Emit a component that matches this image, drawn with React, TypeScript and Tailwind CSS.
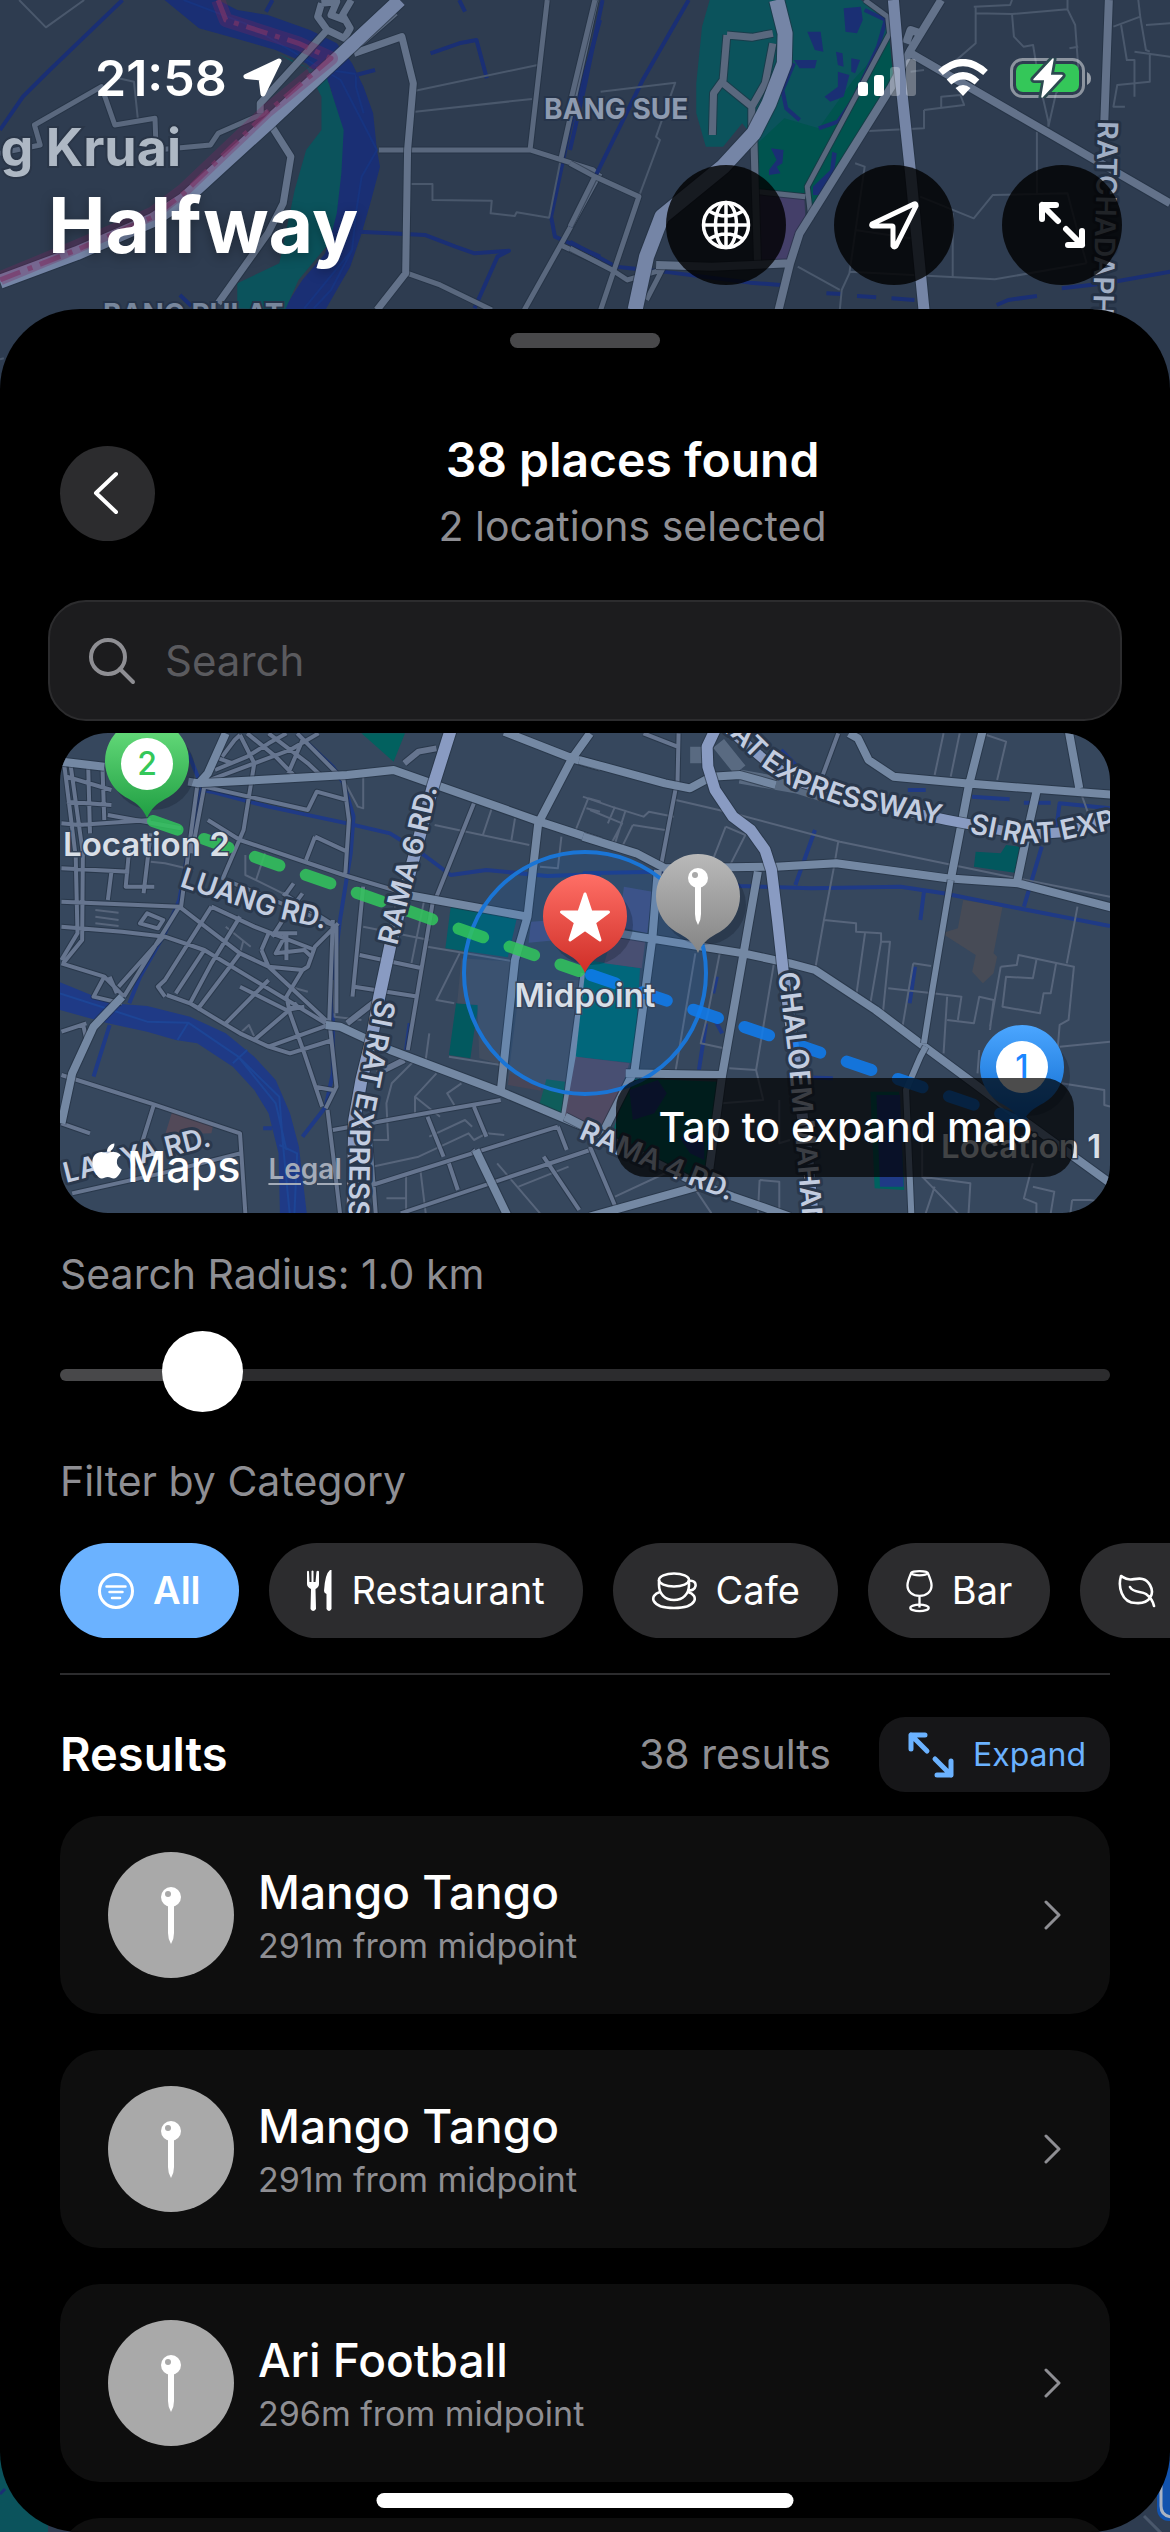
import { useId, useState, type CSSProperties, type ReactNode } from "react";
import { FaApple } from "react-icons/fa";

/* ---------- map primitives ---------- */

type LineProps = { d: string; c: string; w: number; dash?: string; o?: number };

function Line({ d, c, w, dash, o }: LineProps) {
  return (
    <path
      d={d}
      fill="none"
      stroke={c}
      strokeWidth={w}
      strokeDasharray={dash}
      opacity={o}
      strokeLinejoin="round"
      vectorEffect="non-scaling-stroke"
    />
  );
}

function Road({ d, c, w }: LineProps) {
  return (
    <>
      <Line d={d} c="#222f40" w={w + 2} o={0.6} />
      <Line d={d} c={c} w={w} />
    </>
  );
}

type RoadLabelProps = { d: string; children: string; end?: boolean; fill?: string; halo?: string };

function RoadLabel({ d, children, end, fill = "#c3cde0", halo = "#2a384c" }: RoadLabelProps) {
  const id = useId();
  return (
    <>
      <path id={id} d={d} fill="none" />
      <text
        className="font-semibold text-[28px]"
        fill={fill}
        stroke={halo}
        strokeWidth={6}
        strokeLinejoin="round"
        paintOrder="stroke"
        textAnchor={end ? "end" : "start"}
      >
        <textPath href={`#${id}`} startOffset={end ? "100%" : "0"}>
          {children}
        </textPath>
      </text>
    </>
  );
}

/* ---------- full-screen map behind the sheet ---------- */

function CityMap() {
  const street = "#5a687e";
  const avenue = "#63728a";
  const highway = "#7585a6";
  const lane = "#4a586c";
  const water = "#1a2f74";
  return (
    <svg
      aria-hidden="true"
      className="absolute inset-0 h-full w-full"
      viewBox="0 0 1170 2532"
      preserveAspectRatio="xMidYMin slice"
    >
      <rect width="1170" height="2532" fill="#2e3c50" />
      <g transform="scale(0.3827 0.3333)">
        <path
          fill={water}
          d="M430 0L570 0L620 30L700 45L810 90L880 130L920 190L950 260L975 340L985 450L993 500L970 600L945 700L915 800L850 930L740 930L790 840L850 760L880 600L890 450L890 380L860 250L800 190L720 150L600 110L520 85Z"
        />
        <path
          fill="#0b535c"
          d="M725 160L770 190L850 220L870 290L898 390L892 520L880 640L860 730L780 840L745 930L620 925L620 850L730 790L770 570L800 450L840 390L840 290L800 200Z"
        />
        <Line c="#173480" w={2} d="M480 0L640 70L780 165L890 240L985 450L945 530L930 640L920 750L795 925M860 210L930 222L930 260L950 340M920 750L865 870L820 925" />
        <Line c={water} w={4} d="M320 0L130 210L60 290L0 390M1200 0L1215 35M712 0L695 35M1125 160L1200 130L1245 120L1272 235M930 225L980 210M470 885L500 918M940 695L1110 705L1190 740L1240 760L1330 752L1300 770L1240 925M1568 60L1490 380L1440 650L1450 710L1568 770" />
        <Line c={lane} w={2} d="M50 0L120 82L220 0M1085 272L1405 195M1085 335L1390 297M1075 552L1130 552L1130 600L1285 602L1282 640L1345 648L1350 637L1435 653L1465 480M310 235L350 245L360 355M0 1078L10 1075" />
        <Road c={street} w={5} d="M0 460L105 435L90 375L265 260L300 375L405 355L408 450L550 435L570 400L700 335M990 450L1385 450L1550 510L1568 530M1430 0L1385 450M1558 0L1465 480M1568 520L1465 735L1370 930M1465 735L1568 790M1065 820L1150 855L1285 930M925 150L1035 40" />
        <Road c={avenue} w={7} d="M705 370L760 470L740 610L700 700L570 910M925 160L1050 110L1080 250L1065 450L1060 820L985 930M855 90L680 310L680 340M840 10L830 50L855 90L900 115L915 85L895 45L918 0M840 10L880 5L865 45L900 60" />
        <Road c={highway} w={14} d="M1045 0L700 370L480 600L400 660L200 760L0 845" />
        <Line c="#7a2560" w={14} o={0.3} d="M570 0L590 60L780 130L865 175L700 330L480 570L400 640L200 740L0 835" />
        <Line c="#7c3567" w={5} o={0.65} dash="22 8 5 8" d="M570 0L590 60L780 130L865 175L700 335L480 580L400 650L200 750L0 840" />
      </g>
      <g transform="translate(570 0) scale(0.3827 0.3333)">
        <path fill="#0b535c" d="M365 0L760 0L825 60L835 120L800 300L650 570L490 570L490 430L450 370L400 440L355 440L330 340L330 250L345 80Z" />
        <path fill="#00544f" d="M490 430L560 355L650 385L740 240L835 120L845 240L625 655L615 580L490 575Z" />
        <path fill="#443f69" d="M490 578L612 592L617 690L575 780L497 785Z" />
        <path
          fill={water}
          d="M715 25L760 20L765 60L750 100L720 95ZM620 95L655 95L662 155L640 150ZM585 180L645 180L640 205L600 205ZM695 155L712 160L715 200L700 195ZM735 175L758 180L745 220L735 215ZM700 215L730 225L715 290L680 305L665 290L700 260ZM525 445L558 450L555 490L540 500L550 520L520 525L520 510L540 480ZM685 455L697 460L690 520L660 585L635 585L635 560L680 510Z"
        />
        <Line c={water} w={4} d="M310 0L190 240L70 520L0 680M85 0L40 250L0 450M0 725L120 800L245 815L470 848L550 855M770 30L825 60L805 140L740 300L700 365L650 385M585 190L555 270L565 325L600 360M670 880L710 882M750 888L800 892M840 895L900 900M1115 915L1145 900L1220 888M1285 865L1400 850L1568 815" />
        <Line c={lane} w={2} d="M80 275L275 248L225 410L235 420L180 590M1055 20L1150 15L1155 0M1060 40L1155 42L1300 28L1300 0M1060 20L1060 130L1000 190M1155 42L1160 110L1185 140L1210 135L1225 240L1250 365L1250 380M1300 28L1320 75L1328 200L1270 280L1250 380M1305 145L1328 140M925 330L1030 315L1020 285L970 290L970 325M780 393L925 385L925 330M1220 395L1220 580M745 490L770 500L730 820L710 870L705 930M595 800L705 870M730 815L1110 838L1350 790M745 690L890 715M1000 640L1000 835M915 590L1055 655L1105 585L1300 580L1330 710L1350 790M1420 80L1490 50L1485 0M1440 75L1455 180L1475 180L1475 290M1505 75L1568 70M1490 50L1505 150L1515 155M1475 155L1568 170M1515 160L1515 245L1430 255L1420 320L1450 320M890 215L925 210" />
        <Road c={street} w={5} d="M0 490L65 530L180 590L80 930M65 530L0 680M0 745L110 810L150 840L240 810M65 0L0 310M245 800L200 900M770 0L830 50L835 100L620 560L630 660M490 575L615 590" />
        <Road c={street} w={7} d="M410 105L475 112L530 100M410 105L400 240L375 280L372 405M400 250L475 320L475 400M530 130L510 250L475 320M480 400L490 790" />
        <Road c={avenue} w={8} d="M970 0L890 150L840 260L600 700L575 790L545 930M878 130L890 90L915 100M225 795L370 800L575 790M1408 0L1395 400M890 160L1568 610" />
        <Road c={highway} w={15} d="M540 0L562 100L560 190L520 310L480 400L400 500L240 650L200 770L170 930" />
        <Road c={highway} w={11} d="M845 0L860 200L890 520L925 930" />
      </g>
      <text x="181" y="166" textAnchor="end" className="font-bold text-[52px]" fill="#aeb8c4" stroke="#2a3648" strokeWidth="4" paintOrder="stroke">
        Bang Kruai
      </text>
      <text x="544" y="119" className="font-bold text-[28px]" fill="#8e9bb0" stroke="#26344a" strokeWidth="4" paintOrder="stroke">
        BANG SUE
      </text>
      <text x="103" y="324" className="font-bold text-[28px]" fill="#77869c" stroke="#26344a" strokeWidth="4" paintOrder="stroke">
        BANG PHLAT
      </text>
      <RoadLabel d="M1098 121L1096 200L1088 520" fill="#a0aec4" halo="#243144">
        RATCHADAPHISEK RD.
      </RoadLabel>
      <path d="M0 2420L0 2532L48 2532L48 2500Z" fill="#0b535c" />
      <path d="M0 2494L5 2489" stroke={water} strokeWidth="3" />
      <path d="M1144 2516L1162 2534" stroke="#4a586c" strokeWidth="3" />
      <rect x="1157" y="2420" width="30" height="101" rx="12" fill="#1253ae" />
      <path d="M1161 2470V2506Q1161 2517 1174 2517" fill="none" stroke="#aab3c2" strokeWidth="3" />
    </svg>
  );
}

/* ---------- map preview ---------- */

type PinProps = { x: number; y: number; from: string; to: string; children: ReactNode };

function Pin({ x, y, from, to, children }: PinProps) {
  const id = useId();
  return (
    <g transform={`translate(${x} ${y})`}>
      <defs>
        <linearGradient id={id} x1="0" y1="0" x2="0" y2="1">
          <stop offset="0" stopColor={from} />
          <stop offset="1" stopColor={to} />
        </linearGradient>
      </defs>
      <ellipse cx="6" cy="-48" rx="42" ry="40" fill="#0b1422" opacity="0.25" />
      <path d="M0 0C-4 -9 -9 -14 -18 -19A42 42 0 1 1 18 -19C9 -14 4 -9 0 0Z" fill={`url(#${id})`} />
      {children}
    </g>
  );
}

function PreviewMap() {
  const lane = "#57657b";
  const street = "#66758f";
  const avenue = "#7488a3";
  const highway = "#899bc2";
  const water = "#1f3a86";
  return (
    <svg
      role="img"
      aria-label="Map with both locations and their midpoint"
      className="block h-full w-full"
      viewBox="0 0 1050 480"
      preserveAspectRatio="xMidYMid slice"
    >
      <rect width="1050" height="480" fill="#36475d" />
      <g transform="translate(-20 -13) scale(0.35714 0.33333)">
        <path fill={water} d="M40 780L200 850L300 858L420 890L520 940L600 1010L660 1080L700 1180L725 1280L748 1490L672 1490L668 1300L640 1180L600 1110L540 1040L440 970L380 960L300 935L190 910L40 865Z" />
        <Line c="#1d4596" w={2} d="M56 820L200 870L300 905L415 908L555 1010L670 1130L680 1270L700 1490M415 908L385 960M540 1030L580 990M670 1275L720 1300L712 1490M555 1010L660 1150L690 1290" />
        <Line c={water} w={4} d="M415 100L440 165L455 210L480 215L640 260L860 310L980 340L1010 360L1075 405L1150 465L1250 450L1420 468L1570 462M720 40L820 140L850 190L878 290L870 400L840 600L820 780L820 1060L800 1160L735 1250M450 210L430 300L390 540L350 640L280 770L250 850M195 915L150 1070M1035 910L1025 990M625 1225L650 1225" />
        <path fill="#02615f" d="M900 40L1022 40L990 125Z" />
        <path fill="#025f6a" d="M1150 560L1335 595L1310 712L1135 685Z" />
        <path fill="#02595f" d="M1165 850L1228 855L1215 940L1205 1015L1145 1005Z" />
        <path fill="#414d60" d="M1180 715L1325 725L1295 1035L1230 1015L1225 855L1168 850ZM1345 780L1520 780L1495 1030L1470 1110L1310 1080Z" />
        <path fill="#0f5d5b" d="M1418 1078L1470 1085L1462 1185L1398 1155Z" />
        <path fill="#484658" d="M1315 1060L1405 1095L1402 1112L1310 1095Z" />
        <path fill="#424f7c" d="M1375 605L1440 600L1450 660L1368 668Z" />
        <path fill="#524958" d="M370 1175L485 1215L480 1240L350 1245Z" />
        <Line c={lane} w={2} d="M855 190L890 260L905 265L905 170M1105 315L1370 375M1265 265L1240 345M1330 295L1320 360M575 405L575 465L680 520M630 400L605 480M310 425L350 430L430 450M155 570L220 578M155 590L220 600M155 610L220 618M1085 680L1330 725M905 620L1090 660M1075 545L1040 730M1175 700L1110 840L1160 850M1145 1010L1290 1035M1090 940L1080 1020M560 940L585 915L600 950M700 800L750 815M1050 1020L985 1090L970 1150L975 1260L930 1260M1110 1060L1050 1130L1120 1190M1050 1130L1050 1180M1180 1090L1140 1120L1160 1155M1090 1250L1190 1200L1210 1220M930 1340L1060 1310L1200 1240L1215 1260L1250 1240L1300 1245M970 1435L1025 1435M1025 1360L1025 1480M1065 1350L1080 1480M1280 1330L1400 1480M1340 1400L1480 1340M1535 235L1500 330M1535 235L1570 245M1530 265L1568 275M1460 350L1450 445L1400 440M520 620L590 680M570 660L560 700M820 780L825 890L900 900" />
        <Road c={street} w={4} d="M450 190L600 130L700 90L780 40M560 45L600 130L570 330L510 480M490 150L580 110L640 70L690 40M510 110L545 60L560 45M500 115L540 130M580 40L660 110L710 165M640 40L750 130L790 170M735 60L695 160M720 40L850 180L865 300L855 460M460 200L750 270L775 215L860 240M470 300L560 360L850 465L1100 545M770 350L745 420M770 350L860 395M440 200L395 560M460 200L425 400M68 135L100 410L105 640L60 720M85 130L120 400L118 660L65 730M135 140L140 340M175 145L180 300M75 170L200 210M75 245L200 255M60 310L110 315M105 315L310 300M190 285L395 325M60 445L250 455M60 545L390 560M60 620L230 635L350 650L460 690L800 910M250 385L240 500L320 500M310 340L290 520M200 455L190 540M390 560L560 700L640 740L820 920M390 560L235 830M300 580L280 610L330 625L345 600ZM345 650L220 800M480 560L350 780L330 800L350 830M460 690L380 820M560 700L440 870M560 590L480 730L420 850M640 780L520 910M720 850L600 960M560 800L690 870L740 860M520 480L830 620M480 560L600 620L770 690M680 520L830 620L830 880M835 610L770 680L750 740L735 750M620 690L640 740L735 750M735 750L690 830L700 880M690 640L660 700L740 690L760 710M640 640L620 690M660 640L720 640M690 640L690 720M735 520L680 600L650 650M710 490L690 520M355 825L420 850L560 940L640 980L700 1000L820 960M700 880L740 1000L790 1160M640 980L820 910M60 730L180 770L235 830M180 770L150 830L230 850M130 910L60 935M120 910L130 960L90 1060M195 770L215 820M60 1065L310 1150L560 1240L575 1480M320 1150L285 1270M60 1210L140 1240M90 1420L340 1360L560 1300M805 1170L820 1300L840 1480M770 1100L820 1110M820 600L810 900L830 1100L800 1165M905 500L875 830M895 705L1070 745M880 800L1060 830M1100 545L1030 990M1215 250L1110 530M820 1230L1130 1170L1290 1140M1085 1190L1130 1310M1215 1160L1250 1250M930 1395L1210 1300L1450 1220M1210 1300L1220 1290M1010 1480L1540 1290M1145 1330L1170 1410M1450 1220L1475 1290M1410 1310L1510 1470M920 1200L940 1480" />
        <Road c={street} w={6} d="M1020 130L1060 95L1110 85M860 910L920 860L945 840M945 1060L1020 1020" />
        <Road c={avenue} w={8} d="M60 125L180 140M415 185L445 190L470 160L520 40M440 190L700 175L860 165L990 150L1400 305L1570 365M1540 40L1490 115L1395 310L1365 590L1330 720L1290 1115M1300 35L1490 115L1570 140M1030 525L1365 590M800 915L840 920L980 990L1290 1115L1500 1210L1590 1250M60 1210L90 1060L150 920L230 830M1220 1290L1310 1490M1525 760L1480 1120L1470 1190" />
        <Road c={highway} w={12} d="M1150 30L1100 200L1040 440L980 680L950 830L930 950L900 1080L880 1200L875 1490" />
      </g>
      <g transform="translate(530 -13) scale(0.35714 0.33333)">
        <path fill="#00656c" d="M-10 720L140 745L125 1030L-40 1010Z" />
        <path fill="#424f7c" d="M95 500L175 515L160 640L80 620Z" />
        <path fill="#504a63" d="M-40 1010L110 1030L90 1100L40 1220L-70 1190ZM60 655L155 660L145 745L40 730Z" />
        <path fill="#474b56" d="M1045 540L1155 560L1130 700L1140 710L1130 760L1100 790L1070 755L1080 705L985 640L1030 625Z" />
        <path fill="#02585e" d="M1080 395L1150 400L1165 375L1203 380L1190 458L1075 440Z" />
        <path fill="#00625f" d="M110 1075L357 1085L325 1400L60 1250Z" />
        <path fill={water} d="M110 1110L190 1080L215 1120L180 1180L120 1200ZM250 1250L320 1240L320 1320L280 1300Z" />
        <path fill="#00625f" d="M785 1115L865 1115L880 1410L797 1405Z" />
        <path fill={water} d="M802 1125L868 1125L878 1400L812 1400Z" />
        <Line c={water} w={4} d="M-20 460L190 455L420 498L620 505L870 500L990 520L1200 565L1456 618M535 90L590 150M630 330L600 420L575 495M935 515L925 600M1070 230L1175 238M890 210L940 210M1215 248L1290 248M1305 330L1315 250L1456 265M1265 380L1240 470L1215 560M910 740L895 850M355 770L345 820M325 910L305 1050M600 1072L680 1075M350 900L370 940" />
        <Line c={lane} w={2} d="M-20 230L60 260L150 290L165 275L235 290M240 240L400 280L700 365L1150 465L1456 530M0 270L90 310L60 370M70 260L50 310M100 270L70 370M120 315L210 330M120 315L90 380M380 320L435 345L390 440M380 320L340 430M695 365L685 430L655 600L630 750M655 600L745 610L745 635L815 640L815 665L840 665L820 880M770 640L745 830M815 665L785 850M905 730L875 920M905 730L955 738M835 805L960 820L1040 830L1030 900M1000 830L990 1000M1000 900L1075 910L1090 830L1130 840L1120 930M1090 990L1085 1060M1150 740L1120 920M1150 740L1195 735L1200 705L1355 740L1340 900L1315 915L1310 980M1250 720L1240 775L1165 770L1155 860L1260 880L1270 820L1290 820L1305 730M1365 560L1335 730M1456 965L1315 980M1320 1090L1440 1110L1440 1155L1456 1160M990 40L965 165M1035 40L1010 170M1110 45L1165 65L1140 180M1370 205L1395 280M295 700L240 1050M365 690L330 880L310 970L375 985M515 730L465 1050L390 1045M465 1050L485 1140L370 1150M530 1140L530 1270L560 1260M475 1380L530 1385L530 1480M475 1380L470 1480M930 1370L1030 1480M930 1200L930 1370L1065 1390L1060 1480M965 1400L940 1480M1240 1330L1215 1435L1250 1450L1250 1480M1240 1400L1300 1415L1290 1480M1350 1440L1400 1440L1456 1450M1350 1440L1345 1480M290 1400L340 1480M70 1430L230 1350" />
        <Road c={street} w={4} d="M150 40L245 80M248 40L245 190M240 205L200 430M695 40L650 170M0 1280L75 1470" />
        <Line c="#596a81" w={14} d="M300 80L300 130M360 70L420 150M420 170L580 200L700 240" />
        <Road c={avenue} w={8} d="M-30 120L210 190L280 205L340 170L420 165L520 195M725 40L750 55L780 120L850 170L1050 190L1470 225M1100 30L1060 200L1010 480M1340 30L1370 205M1250 215L1230 310L1195 490M-20 350L130 400L210 445L520 440L690 430L1000 475L1200 490L1470 565M190 450L175 650L125 1050L40 1230M80 640L430 700L560 730L630 750L800 870L930 975L1100 1110L1200 1190L1470 1400M470 455L430 700L370 1065L330 1380M100 1060L370 1065M0 1490L300 1400M-70 1190L280 1380L400 1430L560 1490" />
        <Road c={avenue} w={6} d="M1010 480L960 800L935 970M940 980L925 1010L885 1110L900 1490" />
        <Road c={highway} w={10} d="M380 20L500 130L600 190L780 250L1000 300L1220 345L1340 335L1470 285" />
        <Road c={highway} w={11} d="M350 30L328 80L330 140L350 210L400 290L450 330L490 390L508 450L525 600L540 745L560 900L590 1150L610 1320L625 1490" />
      </g>
      <circle cx="525" cy="240" r="121" fill="#0a84ff" fillOpacity="0.1" stroke="#1a75d6" strokeWidth="4" />
      <g strokeWidth="12" strokeLinecap="round" strokeDasharray="26 28" opacity="0.85">
        <path d="M93 88L519 238" stroke="#32c65c" />
        <path d="M531 242L962 388" stroke="#0f7df0" />
      </g>
      <RoadLabel d="M337 213L352 152L366 104L382 34">RAMA 6 RD.</RoadLabel>
      <RoadLabel d="M316 266L302 340L290 400L287 600">SI RAT EXPRESSWAY</RoadLabel>
      <RoadLabel d="M119 153L205 182L290 202">LUANG RD.</RoadLabel>
      <RoadLabel d="M6 450L190 403">LAT YA RD.</RoadLabel>
      <RoadLabel end d="M600 -50L675 7L700 32L735 56L780 72L880 92">
        RAT EXPRESSWAY
      </RoadLabel>
      <RoadLabel d="M909 100L964 111L994 109L1050 97L1300 40">SI RAT EXPRESSWAY</RoadLabel>
      <RoadLabel d="M718 240L728 320L742 480L752 640">CHALOEM MAHANAKHON</RoadLabel>
      <RoadLabel d="M518 405L560 423L620 448L720 488">RAMA 4 RD.</RoadLabel>
      <Pin x={87} y={85} from="#6be07f" to="#1f9e42">
        <circle cy="-54" r="26" fill="#fff" />
        <text y="-43" textAnchor="middle" className="font-medium text-[32px]" fill="#34c759">
          2
        </text>
      </Pin>
      <Pin x={962} y={391} from="#4ba6ff" to="#0a66cc">
        <circle cy="-57" r="26" fill="#fff" />
        <text y="-46" textAnchor="middle" className="font-medium text-[32px]" fill="#1a86ff">
          1
        </text>
      </Pin>
      <Pin x={638} y={220} from="#b9b9b9" to="#858585">
        <g transform="translate(-18 -85)">
          <PinGlyph hole="#a9a9a9" />
        </g>
      </Pin>
      <Pin x={525} y={240} from="#ff6f66" to="#cf2e27">
        <path
          fill="#fff"
          stroke="#fff"
          strokeWidth="3"
          strokeLinejoin="round"
          d="M0 -79L6 -61L23.500 -61L9.500 -50.500L15 -33L0 -43.500L-15 -33L-9.500 -50.500L-23.500 -61L-6 -61Z"
        />
      </Pin>
      <g className="font-semibold text-[33px]" fill="#d9dfe7" stroke="#34445a" strokeWidth="3" paintOrder="stroke">
        <text x="3" y="123">Location 2</text>
        <text x="525" y="274" textAnchor="middle">Midpoint</text>
        <text x="881" y="425">Location 1</text>
      </g>
    </svg>
  );
}

/* ---------- icons ---------- */

function PinGlyph({ hole }: { hole: string }) {
  return (
    <>
      <path d="M15 16H21V46Q21 52 18 57Q15 52 15 46Z" fill="#fff" />
      <circle cx="18" cy="10" r="10" fill="#fff" />
      <circle cx="15" cy="7" r="3" fill={hole} />
    </>
  );
}

function ExpandIcon({ className, weight }: { className: string; weight: number }) {
  return (
    <svg viewBox="0 0 48 48" className={className} fill="none" stroke="currentColor" strokeWidth={weight} strokeLinecap="round" strokeLinejoin="round" aria-hidden="true">
      <path d="M4 18V4H18M4 4L20 20M44 30V44H30M44 44L28 28" />
    </svg>
  );
}

function GlobeIcon() {
  return (
    <svg viewBox="0 0 50 50" className="size-[50px]" fill="none" stroke="currentColor" strokeWidth="3.500" aria-hidden="true">
      <circle cx="25" cy="25" r="22.500" />
      <ellipse cx="25" cy="25" rx="10.500" ry="22.500" />
      <path d="M25 2V48M2 25H48M8 11Q25 21 42 11M8 39Q25 29 42 39" />
    </svg>
  );
}

function NavigateIcon() {
  return (
    <svg viewBox="0 0 50 50" className="size-[50px]" fill="none" stroke="currentColor" strokeWidth="5" strokeLinejoin="round" aria-hidden="true">
      <path d="M45 4L3 24Q2 26 4 26H23Q24 26 24 27V46Q25 48 27 46L47 6Q47 3 45 4Z" />
    </svg>
  );
}

function FilterIcon() {
  return (
    <svg viewBox="0 0 36 36" className="h-9 w-9" fill="none" stroke="currentColor" strokeWidth="3" strokeLinecap="round" aria-hidden="true">
      <circle cx="18" cy="18" r="16.500" />
      <path d="M8.500 13.500H27.500M11.500 19H24.500M14 25H22" strokeWidth="2.500" />
    </svg>
  );
}

function ForkKnifeIcon() {
  return (
    <svg viewBox="0 0 26 42" className="h-[42px] w-[26px]" fill="currentColor" aria-hidden="true">
      <path d="M0 1.500Q1 0 2 1.500L2.500 12H4.500V1Q5.500 0 6.500 1V12H8.500L9.500 1.500Q11 0 12 1.500V14Q12 17 8.500 19L9 39Q6 43 3.500 39L4 19Q0 17 0 14Z" />
      <path d="M24.500 0V39Q22 43 19.500 39V24Q17 23 17 21Q18 4 22.500 0.500Q24 -0.500 24.500 0Z" />
    </svg>
  );
}

function CupIcon() {
  return (
    <svg viewBox="0 0 46 38" className="h-[38px] w-[46px]" fill="none" stroke="currentColor" strokeWidth="2.600" aria-hidden="true">
      <ellipse cx="23" cy="8" rx="15" ry="6.500" />
      <path d="M8 8V13C8 22 14 28 23 28S38 22 38 13V8M38 9C43 8 45 11 44.500 14S41 19 37 18M9 20C-2 23 -1 36 23 36S48 23 37 20" />
    </svg>
  );
}

function WineIcon() {
  return (
    <svg viewBox="0 0 28 44" className="h-11 w-[27px]" fill="none" stroke="currentColor" strokeWidth="2.400" aria-hidden="true">
      <path d="M5.500 3C2 11 1.500 13 1.500 16C1.500 23 7 27 14 27S26.500 23 26.500 16C26.500 13 26 11 22.500 3M14 27V39" />
      <ellipse cx="14" cy="3.500" rx="8.500" ry="2.200" />
      <ellipse cx="14" cy="39.500" rx="9.500" ry="3.300" />
    </svg>
  );
}

function LeafIcon() {
  return (
    <svg viewBox="0 0 38 34" className="h-[34px] w-[38px]" fill="none" stroke="currentColor" strokeWidth="2.600" strokeLinecap="round" strokeLinejoin="round" aria-hidden="true">
      <path d="M3 2C0 12 3 29 18 29C32 30 37 20 32 11C27 2 19 5 13 5.500C8 6 5 3 3 2ZM12 13C15 19 23 17 28 20C32 23 35 27 36 32" />
    </svg>
  );
}

/* ---------- header ---------- */

function StatusBar() {
  return (
    <div className="flex h-[155px] items-center justify-between pl-[95px] pr-[78px] text-white">
      <div className="flex items-center gap-4">
        <span className="text-[50px] font-semibold leading-none">21:58</span>
        <svg viewBox="0 0 40 40" className="size-10" aria-hidden="true">
          <path d="M36 3L3 18.500L18 20L20 36Z" fill="#fff" stroke="#fff" strokeWidth="5" strokeLinejoin="round" />
        </svg>
      </div>
      <div className="flex items-center gap-[22px]">
        <svg viewBox="0 0 58 37" className="h-[37px] w-[58px]" fill="#fff" aria-label="Signal, 2 of 4 bars" role="img">
          <rect y="23" width="10" height="14" rx="3" />
          <rect x="16" y="16" width="10" height="21" rx="3" />
          <rect x="32" y="8" width="10" height="29" rx="3" opacity="0.3" />
          <rect x="48" y="0" width="10" height="37" rx="3" opacity="0.3" />
        </svg>
        <svg viewBox="0 0 50 37" className="h-[37px] w-[50px]" fill="none" stroke="#fff" strokeWidth="7" aria-label="Wi-Fi" role="img">
          <path d="M2.500 13.500Q25 -6.500 47.500 13.500M11 23Q25 10.500 39 23" />
          <path d="M17.500 29Q25 23 32.500 29L25 37Z" fill="#fff" stroke="none" />
        </svg>
        <svg viewBox="0 0 82 40" className="h-10 w-[82px]" aria-label="Battery charging" role="img">
          <rect x="1.500" y="1.500" width="72" height="37" rx="11" fill="none" stroke="#fff" strokeOpacity="0.45" strokeWidth="3" />
          <path d="M77 14V27Q81 25 81 20.500T77 14Z" fill="#fff" opacity="0.5" />
          <rect x="6" y="6" width="63" height="28" rx="7" fill="#34c759" />
          <path d="M43 1L24 21.500H35L32 39L52 17.500H40Z" fill="#fff" stroke="#2c4a50" strokeWidth="7" strokeLinejoin="round" paintOrder="stroke" />
          <path d="M43 1L24 21.500H35L32 39L52 17.500H40Z" fill="#fff" stroke="#fff" strokeWidth="1.500" strokeLinejoin="round" />
        </svg>
      </div>
    </div>
  );
}

function RoundButton({ label, children }: { label: string; children: ReactNode }) {
  return (
    <button type="button" aria-label={label} className="flex size-[120px] items-center justify-center rounded-full bg-black/80 text-white">
      {children}
    </button>
  );
}

function TopBar() {
  return (
    <div className="mt-[10px] mb-6 flex h-[120px] items-center justify-between px-12">
      <h1 className="text-[77px] font-bold leading-none text-white drop-shadow-[0_3px_6px_rgba(0,0,0,0.3)]">Halfway</h1>
      <div className="flex gap-12">
        <RoundButton label="Map style">
          <GlobeIcon />
        </RoundButton>
        <RoundButton label="My location">
          <NavigateIcon />
        </RoundButton>
        <RoundButton label="Full screen">
          <ExpandIcon className="size-[48px]" weight={6} />
        </RoundButton>
      </div>
    </div>
  );
}

/* ---------- sheet ---------- */

function MapPreview() {
  return (
    <section className="relative mx-[60px] mt-3 h-[480px] overflow-hidden rounded-[48px]">
      <PreviewMap />
      <div className="absolute bottom-5 left-[27px] flex items-end text-white">
        <FaApple className="mb-3 size-10" aria-hidden="true" />
        <span className="text-[43px] leading-[54px] font-medium">Maps</span>
        <a href="#legal" className="ml-7 text-[28px] leading-[48px] font-semibold text-[#a3abb8] underline underline-offset-4">
          Legal
        </a>
      </div>
      <button type="button" className="absolute right-9 bottom-9 h-[99px] rounded-[30px] bg-black/70 px-[42px] text-[41px] font-medium text-white">
        Tap to expand map
      </button>
    </section>
  );
}

const MIN_KM = 0.5;
const MAX_KM = 5.25;

function RadiusSlider() {
  const [km, setKm] = useState(1);
  const fill = ((km - MIN_KM) / (MAX_KM - MIN_KM)) * 100;
  return (
    <div className="mx-[60px] mt-[34px]">
      <label htmlFor="radius" className="block text-[41px] leading-[54px] text-[#8e8e93]">
        Search Radius: {km.toFixed(1)} km
      </label>
      <input
        id="radius"
        type="range"
        min={MIN_KM}
        max={MAX_KM}
        step={0.05}
        value={km}
        onChange={(e) => setKm(Number(e.target.value))}
        style={{ "--fill": `${fill}%` } as CSSProperties}
        className="mt-[33px] block h-[81px] w-full appearance-none bg-transparent [&::-webkit-slider-runnable-track]:h-3 [&::-webkit-slider-runnable-track]:rounded-full [&::-webkit-slider-runnable-track]:bg-[linear-gradient(to_right,#48484a_var(--fill),#2c2c2e_var(--fill))] [&::-webkit-slider-thumb]:mt-[-38px] [&::-webkit-slider-thumb]:size-[81px] [&::-webkit-slider-thumb]:appearance-none [&::-webkit-slider-thumb]:rounded-full [&::-webkit-slider-thumb]:bg-white"
      />
    </div>
  );
}

const CATEGORIES = [
  { name: "All", icon: <FilterIcon /> },
  { name: "Restaurant", icon: <ForkKnifeIcon /> },
  { name: "Cafe", icon: <CupIcon /> },
  { name: "Bar", icon: <WineIcon /> },
];

function CategoryFilter() {
  const [active, setActive] = useState("All");
  return (
    <section className="mt-[39px]">
      <h3 className="mx-[60px] text-[41px] leading-[54px] text-[#8e8e93]">Filter by Category</h3>
      <div className="mt-[35px] flex gap-[30px] overflow-hidden pl-[60px]">
        {CATEGORIES.map(({ name, icon }) => (
          <button
            key={name}
            type="button"
            aria-pressed={name === active}
            onClick={() => setActive(name)}
            className={
              "flex h-[95px] shrink-0 items-center gap-[19px] rounded-full px-[38px] text-[38px] text-white " +
              (name === active ? "bg-[#6bb2ff] font-semibold" : "bg-[#2c2c2e]")
            }
          >
            {icon}
            {name}
          </button>
        ))}
        <button type="button" aria-label="Park" className="flex h-[95px] w-[200px] shrink-0 items-center rounded-full bg-[#2c2c2e] px-[38px] text-white">
          <LeafIcon />
        </button>
      </div>
    </section>
  );
}

const RESULTS = [
  { id: 1, name: "Mango Tango", distance: "291m from midpoint" },
  { id: 2, name: "Mango Tango", distance: "291m from midpoint" },
  { id: 3, name: "Ari Football", distance: "296m from midpoint" },
];

function ResultCard({ name, distance }: { name: string; distance: string }) {
  return (
    <li>
      <button type="button" className="flex h-[198px] w-full items-center rounded-[40px] bg-[#0e0e0e] px-12 text-left">
        <span className="flex size-[126px] shrink-0 items-center justify-center rounded-full bg-[#a9a9a9]">
          <svg viewBox="0 0 36 57" className="h-[57px] w-9" aria-hidden="true">
            <PinGlyph hole="#a9a9a9" />
          </svg>
        </span>
        <span className="ml-6 flex-1 pt-1">
          <span className="block text-[46px] leading-[58px] font-medium text-white">{name}</span>
          <span className="block text-[34px] leading-[50px] text-[#8e8e93]">{distance}</span>
        </span>
        <svg viewBox="0 0 18 30" className="h-[30px] w-[18px] text-[#8e8e93]" fill="none" stroke="currentColor" strokeWidth="3" strokeLinecap="round" strokeLinejoin="round" aria-hidden="true">
          <path d="M2 2L15 15L2 28" />
        </svg>
      </button>
    </li>
  );
}

function Sheet() {
  return (
    <main className="relative flex min-h-0 flex-1 flex-col overflow-hidden rounded-[80px] bg-black [&>*]:shrink-0">
      <div className="mx-auto mt-6 h-[15px] w-[150px] rounded-full bg-[#48484a]" />
      <header className="mx-[60px] mt-[78px] flex items-center">
        <button type="button" aria-label="Back" className="flex size-[95px] items-center justify-center rounded-full bg-[#2c2c2e] text-white">
          <svg viewBox="0 0 26 44" className="mr-1 h-11 w-[26px]" fill="none" stroke="currentColor" strokeWidth="4" strokeLinecap="round" strokeLinejoin="round" aria-hidden="true">
            <path d="M23 3L3 22L23 41" />
          </svg>
        </button>
        <div className="flex-1 text-center">
          <h2 className="text-[48px] leading-[67px] font-semibold text-white">38 places found</h2>
          <p className="text-[41px] leading-[67px] text-[#8e8e93]">2 locations selected</p>
        </div>
      </header>
      <div className="mx-12 mt-10 flex h-[121px] items-center gap-[29px] rounded-[38px] border-2 border-[#2c2c2e] bg-[#1c1c1e] px-[38px]">
        <svg viewBox="0 0 48 48" className="size-12 shrink-0 text-[#8e8e93]" fill="none" stroke="currentColor" strokeWidth="4" strokeLinecap="round" aria-hidden="true">
          <circle cx="20" cy="20" r="17" />
          <path d="M32 32L45 45" />
        </svg>
        <input type="text" aria-label="Search" placeholder="Search" className="w-full bg-transparent text-[42px] text-white outline-none placeholder:text-[#5a5a5e]" />
      </div>
      <MapPreview />
      <RadiusSlider />
      <CategoryFilter />
      <hr className="mx-[60px] mt-[35px] border-t-2 border-[#2c2c2e]" />
      <div className="mx-[60px] mt-[42px] flex h-[75px] items-center">
        <h3 className="text-[47px] font-semibold text-white">Results</h3>
        <span className="ml-auto text-[41px] text-[#8e8e93]">38 results</span>
        <button type="button" className="ml-12 flex h-full items-center gap-[18px] rounded-[26px] bg-[#161618] pr-[24px] pl-[28px] text-[32px] text-[#6bb2ff]">
          <ExpandIcon className="size-12" weight={5} />
          Expand
        </button>
      </div>
      <ul className="mx-[60px] mt-6 flex flex-col gap-9">
        {RESULTS.map((r) => (
          <ResultCard key={r.id} name={r.name} distance={r.distance} />
        ))}
        <li className="h-[198px] rounded-[40px] bg-[#0e0e0e]" />
      </ul>
    </main>
  );
}

export default function App() {
  return (
    <div className="relative flex h-screen flex-col overflow-hidden bg-[#2e3c50] font-['Inter',sans-serif]">
      <CityMap />
      <div className="relative">
        <StatusBar />
        <TopBar />
      </div>
      <Sheet />
      <div className="absolute bottom-6 left-1/2 h-[15px] w-[417px] -translate-x-1/2 rounded-full bg-white" />
    </div>
  );
}
